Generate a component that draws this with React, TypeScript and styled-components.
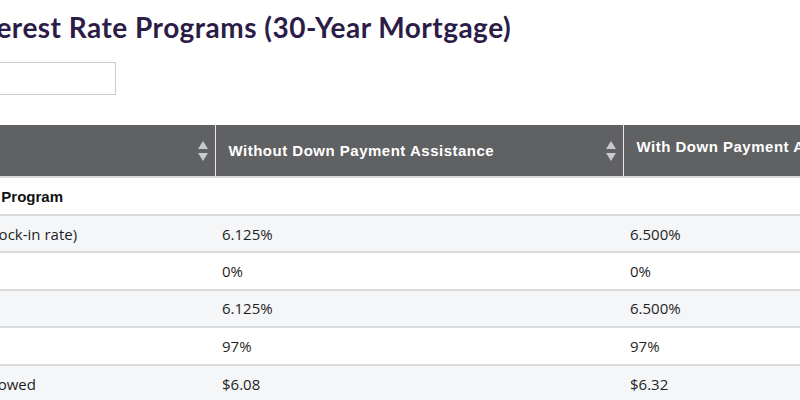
import React from "react";
import styled, { createGlobalStyle } from "styled-components";

const Global = createGlobalStyle`
  html, body { margin: 0; padding: 0; background: #ffffff; }
  body { width: 800px; height: 400px; overflow: hidden; }
`;

const Page = styled.div`
  width: 800px;
  height: 400px;
  overflow: hidden;
`;

const Content = styled.div`
  margin-left: -60px;
  width: 1300px;
`;

const Title = styled.h2`
  margin: 10px 0 0 21px;
  font-family: "Lato", "Open Sans", sans-serif;
  font-weight: 700;
  font-size: 28px;
  line-height: 34px;
  color: #2b1d47;
  letter-spacing: 0.48px;
`;

const FilterInput = styled.input`
  display: block;
  margin: 18px 0 0 0;
  width: 176px;
  height: 33px;
  box-sizing: border-box;
  border: 1px solid #cccccc;
  background: #fff;
  outline: none;
`;

const Table = styled.table`
  margin: 30px 0 0 -54px;
  border-collapse: collapse;
  table-layout: fixed;
  width: 1158px;
`;

const HeadCell = styled.th<{ $w: number; $raised?: boolean }>`
  width: ${(p) => p.$w}px;
  height: 52px;
  box-sizing: border-box;
  background: #5f6163;
  color: #ffffff;
  font-family: "Liberation Sans", Arial, sans-serif;
  font-weight: 700;
  font-size: 15px;
  letter-spacing: 0.5px;
  text-align: left;
  padding: ${(p) => (p.$raised ? "0 14px 9px 13px" : "0 14px 0 13px")};
  border-right: 1px solid #e8e8e8;
  position: relative;
  white-space: nowrap;
  overflow: hidden;
`;

const SortIcon = styled.svg`
  position: absolute;
  right: 6px;
  top: 15px;
`;

const Row = styled.tr<{ $striped?: boolean }>`
  background: ${(p) => (p.$striped ? "#f5f6f7" : "#ffffff")};
  border-top: 2px solid #d9dadb;
`;

const Cell = styled.td<{ $tall?: boolean }>`
  height: ${(p) => (p.$tall ? 38 : 37.4)}px;
  box-sizing: border-box;
  padding: 0 7px;
  font-family: "Open Sans", "Lato", sans-serif;
  font-size: 15px;
  font-weight: 400;
  color: #1f1f26;
  white-space: nowrap;
  overflow: hidden;
  vertical-align: middle;
`;

const GroupCell = styled(Cell)`
  font-family: "Liberation Sans", Arial, sans-serif;
  font-weight: 700;
  color: #111111;
`;

const Sort = () => (
  <SortIcon width="12" height="22" viewBox="0 0 12 22">
    <path d="M6 1 L11 9 L1 9 Z" fill="#c9cacb" />
    <path d="M6 21 L11 13 L1 13 Z" fill="#c9cacb" />
  </SortIcon>
);

const rows = [
  { label: "Interest Rate (Lock-in rate)", a: "6.125%", b: "6.500%" },
  { label: "Points", a: "0%", b: "0%" },
  { label: "APR", a: "6.125%", b: "6.500%" },
  { label: "Max LTV", a: "97%", b: "97%" },
  { label: "Per $1000 borrowed", a: "$6.08", b: "$6.32" },
];

export default function App() {
  return (
    <Page>
      <Global />
      <Content>
        <Title>Interest Rate Programs (30-Year Mortgage)</Title>
        <FilterInput type="text" aria-label="Filter" />
        <Table>
          <thead>
            <tr>
              <HeadCell $w={329}>
                <Sort />
              </HeadCell>
              <HeadCell $w={408}>
                Without Down Payment Assistance
                <Sort />
              </HeadCell>
              <HeadCell $w={421} $raised>
                With Down Payment Assistance
                <Sort />
              </HeadCell>
            </tr>
          </thead>
          <tbody>
            <Row>
              <GroupCell $tall>Mortgage Rate Program</GroupCell>
              <Cell $tall />
              <Cell $tall />
            </Row>
            {rows.map((r, i) => (
              <Row key={r.label} $striped={i % 2 === 0}>
                <Cell>{r.label}</Cell>
                <Cell>{r.a}</Cell>
                <Cell>{r.b}</Cell>
              </Row>
            ))}
          </tbody>
        </Table>
      </Content>
    </Page>
  );
}
